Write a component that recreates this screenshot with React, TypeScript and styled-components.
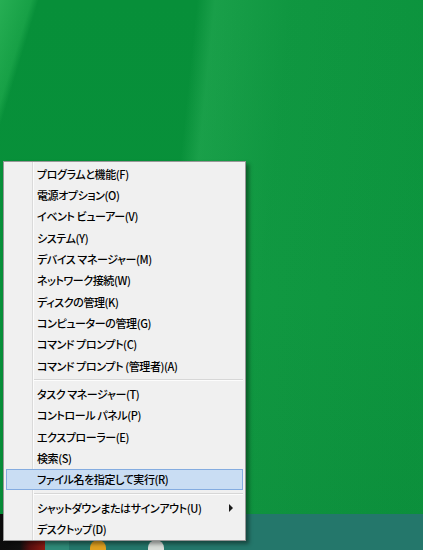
import React from 'react';
import styled, { createGlobalStyle } from 'styled-components';

const GlobalStyle = createGlobalStyle`
	html, body {
		margin: 0;
		padding: 0;
		overflow: hidden;
	}
	body {
		font-family: "Noto Sans CJK JP", "Noto Sans", sans-serif;
	}
`;

const Desktop = styled.div`
	position: relative;
	width: 423px;
	height: 550px;
	display: flex;
	flex-direction: column;
	overflow: hidden;
	background:
		linear-gradient(107deg, rgba(70, 205, 110, 0.5) 0px, rgba(60, 200, 100, 0.3) 30px, rgba(0, 0, 0, 0) 37px),
		linear-gradient(96deg, rgba(0, 0, 0, 0) 196px, rgba(90, 215, 130, 0.22) 214px, rgba(90, 215, 130, 0.1) 290px, rgba(90, 215, 130, 0.06) 450px),
		linear-gradient(180deg, #078f39 0%, #08913a 55%, #078a37 100%);
`;

const Wallpaper = styled.div`
	flex: 1;
`;

const Taskbar = styled.div`
	height: 36px;
	display: flex;
	align-items: flex-end;
	background: #24776b;
`;

const StartArea = styled.div`
	width: 45px;
	height: 100%;
	background: linear-gradient(90deg, #0c0c0c 0, #111 20px, #5a1010 30px, #8a1a12 44px, #8a1a12 45px);
`;

const TaskButton = styled.div<{ $width: number; $lit?: boolean }>`
	width: ${(p) => p.$width}px;
	height: 100%;
	display: flex;
	align-items: flex-end;
	justify-content: center;
	background: ${(p) => (p.$lit ? '#2f8a78' : 'transparent')};
`;

const TaskIcon = styled.div<{ $color: string }>`
	width: 16px;
	height: 10px;
	border-radius: 8px 8px 0 0;
	background: ${(p) => p.$color};
`;

const Menu = styled.div`
	position: absolute;
	left: 3px;
	top: 161px;
	width: 241px;
	padding: 1px 0 0;
	background: #f0f0f0;
	border: 1px solid #979797;
	box-shadow: 3px 3px 4px rgba(0, 0, 0, 0.4);
	&::before {
		content: '';
		position: absolute;
		left: 28px;
		top: 0;
		bottom: 0;
		width: 1px;
		background: #dadada;
		box-shadow: 1px 0 0 #fbfbfb;
	}
`;

const Item = styled.div<{ $active?: boolean }>`
	position: relative;
	z-index: 1;
	height: 21.33px;
	margin: 0 2px;
	padding-left: 30px;
	box-sizing: border-box;
	display: flex;
	align-items: center;
	font-size: 11px;
	font-weight: 500;
	letter-spacing: -0.4px;
	font-feature-settings: "palt";
	color: #000;
	white-space: nowrap;
	border: 1px solid ${(p) => (p.$active ? '#84ace0' : 'transparent')};
	background: ${(p) => (p.$active ? '#c9ddf3' : 'transparent')};
`;

const Separator = styled.div`
	height: 7px;
	margin-left: 29px;
	margin-right: 2px;
	display: flex;
	align-items: center;
	&::after {
		content: '';
		flex: 1;
		height: 1px;
		background: #d7d7d7;
		box-shadow: 0 1px 0 #fcfcfc;
	}
`;

const Arrow = styled.span`
	position: absolute;
	right: 9px;
	top: 50%;
	margin-top: -4px;
	width: 0;
	height: 0;
	border-top: 4px solid transparent;
	border-bottom: 4px solid transparent;
	border-left: 4px solid #1a1a1a;
`;

const groups: string[][] = [
	[
		'プログラムと機能(F)',
		'電源オプション(O)',
		'イベント ビューアー(V)',
		'システム(Y)',
		'デバイス マネージャー(M)',
		'ネットワーク接続(W)',
		'ディスクの管理(K)',
		'コンピューターの管理(G)',
		'コマンド プロンプト(C)',
		'コマンド プロンプト (管理者)(A)',
	],
	['タスク マネージャー(T)', 'コントロール パネル(P)', 'エクスプローラー(E)', '検索(S)', 'ファイル名を指定して実行(R)'],
	['シャットダウンまたはサインアウト(U)', 'デスクトップ(D)'],
];

const ACTIVE = 'ファイル名を指定して実行(R)';
const SUBMENU = 'シャットダウンまたはサインアウト(U)';

export default function App() {
	return (
		<Desktop>
			<GlobalStyle />
			<Wallpaper />
			<Taskbar>
				<StartArea />
				<TaskButton $width={24} $lit />
				<TaskButton $width={58}>
					<TaskIcon $color="#e0a020" />
				</TaskButton>
				<TaskButton $width={58}>
					<TaskIcon $color="#d8dcd8" />
				</TaskButton>
			</Taskbar>
			<Menu>
				{groups.map((group, gi) => (
					<React.Fragment key={gi}>
						{gi > 0 && <Separator />}
						{group.map((label) => (
							<Item key={label} $active={label === ACTIVE}>
								{label}
								{label === SUBMENU && <Arrow />}
							</Item>
						))}
					</React.Fragment>
				))}
			</Menu>
		</Desktop>
	);
}
